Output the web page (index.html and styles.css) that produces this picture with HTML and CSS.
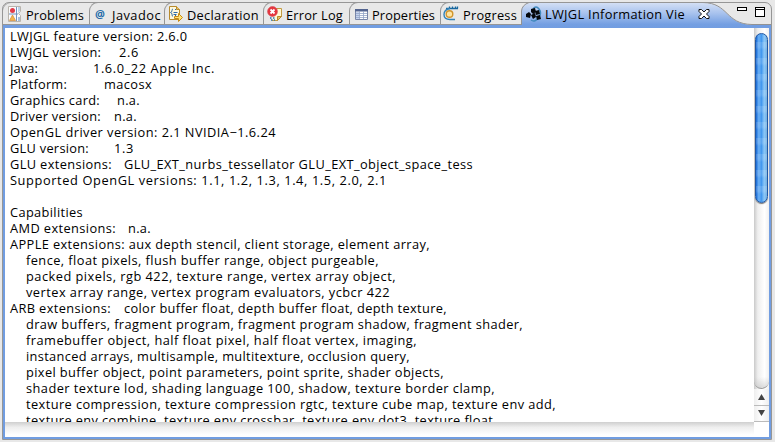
FILE: index.html
```html
<!DOCTYPE html>
<html lang="en">
<head>
<meta charset="utf-8">
<title>LWJGL Information View</title>
<link rel="stylesheet" href="styles.css">
</head>
<body>
<div class="panel">
  <div class="tabs">
    <div class="tab problems">
      <svg class="icon" width="16" height="16" viewBox="0 0 16 16"><path d="M1.500.5h12v5l-2 2 2 2v6h-12z" fill="#fbfbfc" stroke="#b9b4ad"/><path d="M9.500 1v14M2 8h9" stroke="#7392bd"/><path d="M11 1h2v4l-2 2z" fill="#bcd3e8"/><path d="M11 11h2v4h-2z" fill="#a5c0dd"/><circle cx="5.500" cy="4.500" r="2.500" fill="#e13b48"/><path d="M5.500 9l3 5.500h-6z" fill="#f4b64b" stroke="#d18a37" stroke-width=".7"/></svg>
      <span class="fit" data-w="58">Problems</span>
    </div>
    <div class="tab javadoc">
      <span class="at">@</span>
      <span class="fit" data-w="49">Javadoc</span>
    </div>
    <div class="tab declaration">
      <svg class="icon" width="16" height="16" viewBox="0 0 16 16"><path d="M1.500.5h7l3 3v10h-10z" fill="#fff9dc" stroke="#b88b2d"/><path d="M8.500.5v3h3" fill="#e9c46b" stroke="#b88b2d"/><path d="M5 3q-1 0-1 1.500T2.500 6.500Q4 6.700 4 8.500T5 10.500M7.500 3v1M7.500 9v1M5.500 6.500h4M5.500 8.500h3" fill="none" stroke="#2c6aa9"/><path d="M6.500 10.500h4v-3l4 4-4 4v-3h-4z" fill="#ffe477" stroke="#c88a12"/></svg>
      <span class="fit" data-w="72">Declaration</span>
    </div>
    <div class="tab errorlog">
      <svg class="icon" width="16" height="16" viewBox="0 0 16 16"><path d="M7 2.500h7.500v8l-4 4H5" fill="#fff8d5" stroke="#c39b42"/><path d="M14.500 10.500h-4v4z" fill="#e8c264" stroke="#b98a2c"/><circle cx="5.500" cy="5.500" r="4.900" fill="#e6343d" stroke="#d74d55" stroke-width=".7"/><path d="M3.500 3.500l4 4m0-4l-4 4" stroke="#fff" stroke-width="1.800"/><path d="M3 12h1.500M6 12h1.500M4 14h1.500M7 14h1" stroke="#2774b1" stroke-width="1.300"/></svg>
      <span class="fit" data-w="57">Error Log</span>
    </div>
    <div class="tab properties">
      <svg class="icon" width="16" height="16" viewBox="0 0 16 16"><path d="M1.500 3.500h12v10h-12z" fill="#fff" stroke="#7886a8"/><path d="M1 3h13v2.500H1z" fill="#53648f"/><path d="M2 6h3v7H2z" fill="#c6d4ee"/><path d="M2 7.500h11M2 9.500h11M2 11.500h11M5.500 5v8M9.500 5v8" stroke="#93a4c6" stroke-width=".8"/></svg>
      <span class="fit" data-w="63">Properties</span>
    </div>
    <div class="tab progress">
      <svg class="icon" width="16" height="16" viewBox="0 0 16 16"><path d="M3 2.500h12M6.500.5v2M9.500.5v2M12.500.5v2M14.500.5v2" stroke="#17679f" stroke-width="1.300"/><path d="M7 2.500Q1 3.500 1 8.500q0 5 6 5h5" fill="none" stroke="#3383b8" stroke-width="1.400"/><circle cx="6.500" cy="8" r="3.300" fill="#ffe4a0" stroke="#d1952c" stroke-width="1.400"/></svg>
      <span class="fit" data-w="54">Progress</span>
    </div>
    <div class="active">
      <svg class="shape" width="250" height="26" viewBox="0 0 250 26"><defs><linearGradient id="blue" x2="0" y2="1"><stop offset="0" stop-color="#d3dff5"/><stop offset=".4" stop-color="#a9c3ee"/><stop offset=".85" stop-color="#749fe2"/><stop offset="1" stop-color="#719de1"/></linearGradient></defs><path d="M0 26V9Q1 3 8 1H182C208 1 204 22 231 23v3z" fill="url(#blue)"/><path d="M.5 23V9Q1 3 8 .5H182C208 1 204 22 231 22.500H250" fill="none" stroke="#929292"/></svg>
      <svg class="icon" width="17" height="17" viewBox="0 0 17 17"><path d="M8 3Q11-1 14 3t0 8q-4 6-8 3" fill="none" stroke="#4089bd" stroke-width="1.500"/><path d="M1 8l3-2 2 2-1 4-4-1zM6 3l4-1 1 4-3 2-2-2zM6 9l4-2 1 4-3 2zM10 5l4-1 1 4-4 1zM11 10l4-1 1 4-4 1z" fill="#05080c"/></svg>
      <span class="fit" data-w="140">LWJGL Information Vie</span>
      <svg class="close" width="12" height="12" viewBox="0 0 12 12"><path d="M1 1.500h2.500L6 4l2.500-2.500H11v2L8.500 6 11 8.500v2H8.500L6 8l-2.500 2.500H1v-2L3.500 6 1 3.500z" fill="#fff" stroke="#111"/></svg>
    </div>
    <div class="controls"><i class="min"></i><i class="max"></i></div>
  </div>
  <div class="content">
    <div class="text">
      <p><span class="fit" data-w="177.500">LWJGL feature version: 2.6.0</span></p>
      <p><span class="fit" data-w="91" data-col="109">LWJGL version:</span><span class="fit" data-w="20">2.6</span></p>
      <p><span class="fit" data-w="28" data-col="83">Java:</span><span class="fit" data-w="122">1.6.0_22 Apple Inc.</span></p>
      <p><span class="fit" data-w="57" data-col="94">Platform:</span><span class="fit" data-w="48">macosx</span></p>
      <p><span class="fit" data-w="90" data-col="107">Graphics card:</span><span class="fit" data-w="23">n.a.</span></p>
      <p><span class="fit" data-w="91" data-col="104">Driver version:</span><span class="fit" data-w="23">n.a.</span></p>
      <p><span class="fit" data-w="266">OpenGL driver version: 2.1 NVIDIA−1.6.24</span></p>
      <p><span class="fit" data-w="79" data-col="104">GLU version:</span><span class="fit" data-w="20">1.3</span></p>
      <p><span class="fit" data-w="102" data-col="114">GLU extensions:</span><span class="fit" data-w="349">GLU_EXT_nurbs_tessellator GLU_EXT_object_space_tess</span></p>
      <p><span class="fit" data-w="377">Supported OpenGL versions: 1.1, 1.2, 1.3, 1.4, 1.5, 2.0, 2.1</span></p>
      <p></p>
      <p><span class="fit" data-w="73">Capabilities</span></p>
      <p><span class="fit" data-w="106" data-col="118">AMD extensions:</span><span class="fit" data-w="23">n.a.</span></p>
      <p><span class="fit" data-w="420">APPLE extensions: aux depth stencil, client storage, element array,</span></p>
      <p class="sub"><span class="fit" data-w="353">fence, float pixels, flush buffer range, object purgeable,</span></p>
      <p class="sub"><span class="fit" data-w="370">packed pixels, rgb 422, texture range, vertex array object,</span></p>
      <p class="sub"><span class="fit" data-w="364">vertex array range, vertex program evaluators, ycbcr 422</span></p>
      <p><span class="fit" data-w="101" data-col="114">ARB extensions:</span><span class="fit" data-w="323">color buffer float, depth buffer float, depth texture,</span></p>
      <p class="sub"><span class="fit" data-w="497">draw buffers, fragment program, fragment program shadow, fragment shader,</span></p>
      <p class="sub"><span class="fit" data-w="391">framebuffer object, half float pixel, half float vertex, imaging,</span></p>
      <p class="sub"><span class="fit" data-w="384">instanced arrays, multisample, multitexture, occlusion query,</span></p>
      <p class="sub"><span class="fit" data-w="418">pixel buffer object, point parameters, point sprite, shader objects,</span></p>
      <p class="sub"><span class="fit" data-w="469">shader texture lod, shading language 100, shadow, texture border clamp,</span></p>
      <p class="sub"><span class="fit" data-w="530">texture compression, texture compression rgtc, texture cube map, texture env add,</span></p>
      <p class="sub"><span class="fit" data-w="471">texture env combine, texture env crossbar, texture env dot3, texture float,</span></p>
    </div>
    <div class="vscroll">
      <div class="thumb"></div>
      <div class="cap"></div>
      <div class="arrow"><svg width="7" height="6"><path d="M3.500 0L7 6H0z" fill="#444"/></svg></div>
      <div class="arrow down"><svg width="7" height="6"><path d="M0 0h7L3.500 6z" fill="#444"/></svg></div>
    </div>
    <div class="hscroll"></div>
    <div class="corner"></div>
  </div>
</div>
<script src="fit.js"></script>
</body>
</html>
```
FILE: styles.css
```css
* { box-sizing: border-box; }
body {
  margin: 0;
  width: 775px;
  height: 442px;
  padding: 2px 3px 1px 2px;
  overflow: hidden;
  background: #e8e8e8;
  color: #000;
  font: 12.8px/16px "Open Sans", "Noto Sans", sans-serif;
}
.panel {
  height: 438px;
  border: 1px solid #969696;
  border-top-left-radius: 7px;
  border-top-right-radius: 7px;
  overflow: hidden;
}
.fit { display: inline-block; white-space: pre; }
.tabs { display: flex; height: 23px; margin: -1px 0 0 -1px; }
.tab {
  display: flex;
  flex: none;
  align-items: flex-start;
  border: 1px solid #969696;
  border-width: 1px 0 1px 1px;
  border-top-left-radius: 9px 9px;
  padding: 3px 0 0 4px;
}
.tab .icon { flex: none; margin-right: 3px; }
.tab .fit { margin-top: 1px; }
.problems { width: 87px; }
.javadoc { width: 75px; }
.declaration { width: 99px; padding-left: 3px; }
.errorlog { width: 86px; padding-left: 3px; }
.properties { width: 91px; }
.properties .icon { margin-right: 2px; }
.progress { width: 81px; padding-left: 2px; }
.progress .icon { margin-right: 4px; }
.at { width: 17px; margin: 0 0 0 1px; color: #246ba8; font: bold 11px/15px "Open Sans", sans-serif; }
.active { position: relative; display: flex; width: 211px; flex: none; padding: 4px 0 0 4px; }
.shape { position: absolute; left: 0; top: 0; }
.active > :not(.shape) { position: relative; }
.active .icon { flex: none; margin-right: 3px; }
.active .fit { margin-top: 0; }
.close { flex: none; margin: 2px 0 0 13px; }
.controls { position: relative; display: flex; gap: 8px; padding: 5px 0 0 5px; }
.min { width: 10px; height: 4px; border: 1px solid #000; background: #fff; }
.max { width: 10px; height: 10px; border: 1px solid #000; border-top: 3px double #000; background: #fff; }
.content {
  display: grid;
  grid-template: 394px 15px / 749px 15px;
  width: 768px;
  border: solid #719de1;
  border-width: 3px 2px 2px;
  background: #fff;
}
.text { overflow: hidden; padding: 0 0 0 5px; }
.text p { display: flex; height: 16px; margin: 0; }
.text .sub { padding-left: 16px; }
.vscroll {
  display: flex;
  flex-direction: column;
  padding-top: 5px;
  background: linear-gradient(90deg, #c9c9c9, #eee 25%, #fff 70%, #f0f0f0);
}
.thumb {
  flex: none;
  height: 170px;
  margin: 0 1px;
  border: 1px solid #2057a3;
  border-radius: 7px;
  background: repeating-linear-gradient(0deg, #fff0 0 8px, #fff2 11px 16px), linear-gradient(90deg, #1668d5, #6bb0f5 25%, #4398ee 50%, #8bc7f7 75%, #72aee1);
  box-shadow: 0 1px 1px #777;
}
.cap { flex: none; height: 186px; border-bottom: 1px solid #999; border-radius: 0 0 8px 8px; background: linear-gradient(#fff0 94%, #bbb8); }
.arrow { display: flex; flex: 1; align-items: center; justify-content: center; background: linear-gradient(90deg, #eee, #fff 50%, #eee); }
.down { border-top: 1px solid #bbb; border-bottom: 1px solid #bbb; }
.hscroll { background: linear-gradient(#cfcfcf, #eee 35%, #fff 85%); }
.corner { background: #fff; }
```
FILE: fit.js
```js
// Spread each run of text across its column width.
for (const el of document.querySelectorAll(".fit")) {
  const width = Number(el.dataset.w);
  const natural = el.getBoundingClientRect().width;
  el.style.letterSpacing = (width - natural) / el.textContent.length + "px";
  if (el.dataset.col) el.style.width = el.dataset.col + "px";
}
```
